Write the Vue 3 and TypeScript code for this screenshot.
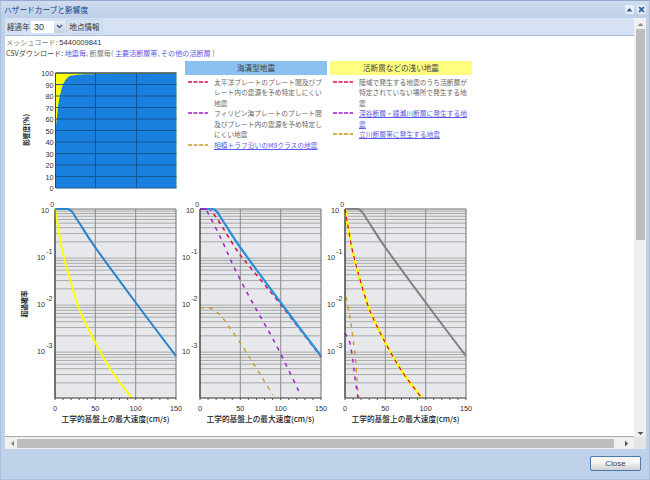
<script setup lang="ts">
type Pt = [number, number];
interface Series {
  color: string;
  width: number;
  dash?: string;
  pts: Pt[];
}
interface Plot {
  left: number;
  width: number;
  title?: string;
  series: Series[];
}

const PW = 121;
const PH = 189;
const TOP = 8;
const DECADE = 47;

const blueLine: Pt[] = [[0, 0], [12, 0], [15, 1], [18, 4], [21, 9], [25, 15], [40, 38], [81, 94], [121, 147]];
const yellowLine: Pt[] = [[0, 0], [1, 6], [2, 12], [4.3, 25], [7, 40], [10, 52], [15.7, 73], [25, 102], [40, 133], [56.7, 162], [76.7, 189]];

const plots: Plot[] = [
  {
    left: 35,
    width: 160,
    title: "超過確率",
    series: [
      { color: "#2a82cc", width: 2, pts: blueLine },
      { color: "#ffff00", width: 2, pts: yellowLine },
    ],
  },
  {
    left: 20,
    width: 145,
    series: [
      { color: "#d8104a", width: 1.5, dash: "4 4", pts: [[0, 0], [9, 0], [13, 4], [20, 14], [36.7, 41], [50, 58], [81, 96], [121, 148]] },
      { color: "#2a90dc", width: 2.2, pts: blueLine },
      { color: "#a01cc8", width: 1.6, pts: [[0, 0], [7, 0]] },
      { color: "#a01cc8", width: 1.5, dash: "4 5", pts: [[7, 2], [21.7, 31], [33, 56], [46.7, 83], [60, 107], [73, 130], [86.7, 157], [100, 185]] },
      { color: "#c99a1e", width: 1.4, dash: "4 5", pts: [[0, 99], [10, 99], [20, 106], [30, 119], [41.7, 136], [51.7, 152], [61.7, 168], [73, 186]] },
    ],
  },
  {
    left: 20,
    width: 145,
    series: [
      { color: "#808080", width: 2, pts: blueLine },
      { color: "#ffff00", width: 2.4, pts: yellowLine },
      { color: "#d8104a", width: 1.3, dash: "4 4", pts: yellowLine },
      { color: "#c99a1e", width: 1.4, dash: "4 5", pts: [[1, 88], [5, 108], [8, 129], [10.7, 153], [13, 183], [14, 189]] },
      { color: "#a01cc8", width: 1.4, dash: "4 5", pts: [[0, 124], [5, 134], [8, 153], [10, 169], [13, 189]] },
    ],
  },
];

// catmull-rom through the points so the curves come out smooth
const toPath = (pts: Pt[]) => {
  let d = `M${pts[0][0]} ${pts[0][1]}`;
  for (let i = 0; i < pts.length - 1; i++) {
    const p0 = pts[Math.max(i - 1, 0)];
    const p1 = pts[i];
    const p2 = pts[i + 1];
    const p3 = pts[Math.min(i + 2, pts.length - 1)];
    const c1x = p1[0] + (p2[0] - p0[0]) / 6;
    const c1y = Math.max(p1[1] + (p2[1] - p0[1]) / 6, 0);
    const c2x = p2[0] - (p3[0] - p1[0]) / 6;
    const c2y = Math.max(p2[1] - (p3[1] - p1[1]) / 6, 0);
    d += ` C${c1x.toFixed(1)} ${c1y.toFixed(1)} ${c2x.toFixed(1)} ${c2y.toFixed(1)} ${p2[0]} ${p2[1]}`;
  }
  return d;
};

// log grid, 2..9 in every decade
const minorLines: number[] = [];
for (let d = 0; d < 4; d++) {
  for (let n = 2; n <= 9; n++) {
    minorLines.push(d * DECADE + DECADE * (1 - Math.log10(n)));
  }
}
const decades = [
  { exp: "0", x: -14, y: 4 },
  { exp: "-1", x: -18, y: DECADE + 4 },
  { exp: "-2", x: -18, y: DECADE * 2 + 4 },
  { exp: "-3", x: -18, y: DECADE * 3 + 4 },
];
const ticks = Array.from({ length: 16 }, (_, i) => (i * PW) / 15);
const xLabels = [0, 50, 100, 150];

const percent = [100, 90, 80, 70, 60, 50, 40, 30, 20, 10, 0];
const blueArea =
  "M0 115 L0 57 " +
  toPath([[0, 57], [1.5, 44], [3, 30], [6.7, 14], [11.7, 5], [20, 2], [45, 1], [121, 0.5]]).replace("M0 57", "") +
  " L121 115 Z";

const legendSea = [
  { color: "#d8104a", text: "太平洋プレートのプレート間及びプレート内の震源を予め特定しにくい地震", link: false },
  { color: "#a01cc8", text: "フィリピン海プレートのプレート間及びプレート内の震源を予め特定しにくい地震", link: false },
  { color: "#c99a1e", text: "相模トラフ沿いのM8クラスの地震", link: true },
];
const legendLand = [
  { color: "#d8104a", text: "陸域で発生する地震のうち活断層が特定されていない場所で発生する地震", link: false },
  { color: "#a01cc8", text: "深谷断層・綾瀬川断層に発生する地震", link: true },
  { color: "#c99a1e", text: "立川断層帯に発生する地震", link: true },
];
const legends = [
  { title: "海溝型地震", cls: "head-sea", items: legendSea },
  { title: "活断層などの浅い地震", cls: "head-land", items: legendLand },
];
</script>

<template>
  <div class="window">
    <div class="titlebar">
      <span class="title">ハザードカーブと影響度</span>
      <div class="tools">
        <span class="tool">
          <svg width="9" height="9" viewBox="0 0 9 9"><path d="M1.5 6.5 L4.5 3 L7.5 6.5 Z" fill="#2f5f9e" /></svg>
        </span>
        <span class="tool">
          <svg width="9" height="9" viewBox="0 0 9 9"><path d="M2 2 L7 7 M7 2 L2 7" stroke="#3f6aa4" stroke-width="1.8" /></svg>
        </span>
      </div>
    </div>

    <div class="inner">
      <div class="body-row">
        <div class="left-col">
          <div class="toolbar">
            <span class="tb-label">経過年</span>
            <div class="select">
              <span class="select-value">30</span>
              <span class="select-arrow">
                <svg width="7" height="5" viewBox="0 0 7 5"><path d="M1 1 L3.5 3.6 L6 1" fill="none" stroke="#3a5f96" stroke-width="1.4" /></svg>
              </span>
            </div>
            <button class="tb-button">地点情報</button>
          </div>

          <div class="content">
            <div class="meta">
              <div class="meta-line"><span class="muted">メッシュコード:</span> <span class="code">5440009841</span></div>
              <div class="meta-line"><span class="dark">CSVダウンロード:</span> <span class="plain-link">地震毎</span><span class="muted">, 断層毎( </span><span class="plain-link">主要活断層帯</span><span class="muted">, </span><span class="plain-link">その他の活断層</span><span class="muted"> )</span></div>
            </div>

            <div class="top-row">
              <svg class="impact" width="160" height="135" viewBox="0 0 160 135">
                <text class="axis-title" transform="translate(9 69) rotate(-90)" text-anchor="middle">影響度(%)</text>
                <g transform="translate(35.5 12)">
                  <rect width="121" height="115" fill="#ffff00" />
                  <path :d="blueArea" fill="#1a80e0" />
                  <line v-for="(p, i) in percent" :key="p" x1="0" x2="121" :y1="i * 11.5" :y2="i * 11.5" stroke="#14568f" stroke-width="1" />
                  <line x1="40" x2="40" y1="0" y2="115" stroke="#14568f" />
                  <line x1="81" x2="81" y1="0" y2="115" stroke="#14568f" />
                  <path d="M0 115 V0 H121" fill="none" stroke="#444" stroke-width="1" />
                  <text v-for="(p, i) in percent" :key="'l' + p" class="tick" x="-2" :y="i * 11.5 + 3" text-anchor="end">{{ p }}</text>
                </g>
              </svg>

              <div v-for="group in legends" :key="group.title" class="legend">
                <div class="legend-head" :class="group.cls">{{ group.title }}</div>
                <div v-for="item in group.items" :key="item.text" class="legend-row">
                  <svg class="sample" width="20" height="10" viewBox="0 0 20 10">
                    <line x1="0" x2="20" y1="5" y2="5" :stroke="item.color" stroke-width="1.4" stroke-dasharray="4 1.5" />
                  </svg>
                  <a v-if="item.link" class="legend-link">{{ item.text }}</a>
                  <span v-else class="legend-text">{{ item.text }}</span>
                </div>
              </div>
            </div>

            <div class="plots">
              <svg
                v-for="(plot, idx) in plots"
                :key="idx"
                :width="plot.width"
                height="226"
                :viewBox="`0 0 ${plot.width} 226`"
              >
                <text v-if="plot.title" class="axis-title" transform="translate(7 103) rotate(-90)" text-anchor="middle">{{ plot.title }}</text>
                <g :transform="`translate(${plot.left} ${TOP})`">
                  <rect :width="PW" :height="PH" fill="#e6e8ec" />
                  <line v-for="y in minorLines" :key="y" x1="0" :x2="PW" :y1="y" :y2="y" stroke="#a8a8a8" stroke-width="1" />
                  <line x1="40.3" x2="40.3" y1="0" :y2="PH" stroke="#8a8a8a" />
                  <line x1="80.7" x2="80.7" y1="0" :y2="PH" stroke="#8a8a8a" />
                  <path :d="`M0 ${PH} V0 H${PW} V${PH}`" fill="none" stroke="#707070" stroke-width="1" />
                  <path
                    v-for="(s, j) in plot.series"
                    :key="j"
                    :d="toPath(s.pts)"
                    fill="none"
                    :stroke="s.color"
                    :stroke-width="s.width"
                    :stroke-dasharray="s.dash"
                  />
                  <line x1="0" :x2="PW" :y1="PH" :y2="PH" stroke="#333" />
                  <line x1="0" x2="0" y1="0" :y2="PH" stroke="#333" />
                  <line v-for="t in ticks" :key="t" :x1="t" :x2="t" :y1="PH" :y2="PH + 2" stroke="#555" />
                  <text v-for="d in decades" :key="d.exp" class="tick" :x="d.x" :y="d.y">10<tspan class="sup" dx="1" dy="-6">{{ d.exp }}</tspan></text>
                  <text
                    v-for="(v, k) in xLabels"
                    :key="v"
                    class="tick"
                    :x="(k * PW) / 3"
                    :y="PH + 13"
                    text-anchor="middle"
                  >{{ v }}</text>
                  <text class="axis-title wide" :x="PW / 2" :y="PH + 24" text-anchor="middle">工学的基盤上の最大速度(cm/s)</text>
                </g>
              </svg>
            </div>
          </div>
        </div>

        <div class="vscroll">
          <svg class="arrow" width="9" height="7" viewBox="0 0 9 7"><path d="M1.5 5 L4.5 2 L7.5 5 Z" fill="#8a8a8a" /></svg>
          <div class="vthumb"></div>
          <div class="vspace"></div>
          <svg class="arrow" width="9" height="7" viewBox="0 0 9 7"><path d="M1.5 2 L4.5 5 L7.5 2 Z" fill="#555" /></svg>
        </div>
      </div>

      <div class="hscroll">
        <div class="hbar">
          <svg width="7" height="9" viewBox="0 0 7 9"><path d="M5 1.5 L2 4.5 L5 7.5 Z" fill="#8a8a8a" /></svg>
          <div class="hthumb"></div>
          <svg width="7" height="9" viewBox="0 0 7 9"><path d="M2 1.5 L5 4.5 L2 7.5 Z" fill="#555" /></svg>
        </div>
        <div class="corner"></div>
      </div>
    </div>

    <div class="footer">
      <button class="close">Close</button>
    </div>
  </div>
</template>

<style>
html,
body {
  margin: 0;
  background: #fff;
}
</style>

<style scoped>
.window {
  width: 650px;
  height: 480px;
  box-sizing: border-box;
  display: flex;
  flex-direction: column;
  background: #bfd1e9;
  border-top: 1px solid #8fa9d0;
  border-left: 1px solid #a9bfdf;
  border-right: 1px solid #a9bfdf;
  border-bottom: 1px solid #a9bfdf;
  font-family: "Noto Sans CJK JP", "Liberation Sans", sans-serif;
  overflow: hidden;
}
.titlebar {
  height: 17px;
  flex: none;
  display: flex;
  align-items: center;
  justify-content: space-between;
  padding: 0 3px 0 3px;
  background: linear-gradient(#d0dcee, #bccfe7);
}
.title {
  font-size: 7.7px;
  color: #15428b;
}
.tools {
  display: flex;
  gap: 3px;
}
.tool {
  width: 9px;
  height: 9px;
  display: block;
  background: #e8f0fa;
  border-radius: 2px;
}
.tool svg {
  display: block;
}
.inner {
  margin: 0 3px 0 4px;
  height: 431px;
  flex: none;
  display: flex;
  flex-direction: column;
}
.body-row {
  display: flex;
  height: 419px;
  flex: none;
}
.left-col {
  flex: 1;
  min-width: 0;
  display: flex;
  flex-direction: column;
}
.toolbar {
  height: 17px;
  flex: none;
  display: flex;
  align-items: center;
  padding-left: 2px;
  background: #d6e2f3;
  border-bottom: 1px solid #a9bfdf;
}
.tb-label {
  font-size: 7.6px;
  color: #333;
  width: 24px;
}
.select {
  width: 34px;
  height: 12px;
  display: flex;
  background: #fff;
}
.select-value {
  flex: 1;
  font-family: "Liberation Sans", sans-serif;
  font-size: 9px;
  line-height: 12px;
  padding-left: 3px;
  color: #333;
}
.select-arrow {
  width: 11px;
  display: flex;
  align-items: center;
  justify-content: center;
  background: linear-gradient(#e8eef6, #c4cfde);
}
.tb-button {
  margin-left: 1px;
  width: 37px;
  height: 15px;
  padding: 0;
  border: 1px solid #c5d5ea;
  border-radius: 3px;
  background: #d3e1f3;
  font-family: inherit;
  font-size: 7.6px;
  color: #333;
}
.content {
  flex: 1;
  min-height: 0;
  background: #fff;
  overflow: hidden;
  border-bottom: 1px solid #a8a8a8;
}
.meta {
  padding: 1px 0 0 1px;
  height: 24px;
}
.meta-line {
  height: 11px;
  font-size: 7.1px;
  line-height: 11px;
  white-space: pre-wrap;
}
.muted {
  color: #777;
}
.dark {
  color: #444;
}
.code {
  font-family: "Liberation Sans", sans-serif;
  font-size: 7.6px;
  color: #333;
}
.plain-link {
  color: #5a5ae6;
}
.top-row {
  display: flex;
  height: 140px;
  padding-left: 15px;
}
.impact {
  flex: none;
}
.legend {
  width: 142px;
  flex: none;
  margin-left: 5px;
}
.legend + .legend {
  margin-left: 3px;
}
.legend-head {
  height: 14px;
  line-height: 14px;
  text-align: center;
  font-size: 7.6px;
  color: #444;
}
.head-sea {
  background: #8cc0f0;
}
.head-land {
  background: #ffff7f;
}
.legend-row {
  display: flex;
  padding: 1.5px 0 0 3px;
  margin-bottom: -1.5px;
}
.sample {
  flex: none;
  margin-right: 6px;
}
.legend-text,
.legend-link {
  font-size: 6.75px;
  line-height: 10.6px;
  width: 109px;
}
.legend-text {
  color: #666;
}
.legend-link {
  color: #5a5ae6;
  text-decoration: underline;
}
.plots {
  display: flex;
  padding-left: 15px;
}
.plots svg {
  flex: none;
  display: block;
  overflow: visible;
}
.tick {
  font-family: "Liberation Sans", sans-serif;
  font-size: 7.3px;
  fill: #333;
}
.sup {
  font-size: 7px;
}
.axis-title {
  font-size: 6.8px;
  font-weight: 700;
  fill: #222;
}
.wide {
  font-size: 7.7px;
  font-weight: 500;
}
.vscroll {
  width: 12px;
  flex: none;
  display: flex;
  flex-direction: column;
  align-items: center;
  background: #f0f0f0;
  padding-top: 3px;
}
.arrow {
  flex: none;
  height: 7px;
}
.vthumb {
  width: 9px;
  height: 211px;
  margin-top: 1px;
  background: #bdbdbd;
}
.vspace {
  flex: 1;
}
.hscroll {
  display: flex;
  height: 12px;
  flex: none;
}
.hbar {
  flex: 1;
  display: flex;
  align-items: center;
  padding: 0 4px;
  background: #f0f0f0;
}
.hthumb {
  height: 9px;
  width: 597px;
  margin-left: 1px;
  margin-right: auto;
  background: #bdbdbd;
}
.corner {
  width: 12px;
  background: #e4e4e4;
}
.footer {
  flex: 1;
  display: flex;
  justify-content: flex-end;
  align-items: flex-start;
  padding: 7px 8px 0 0;
}
.close {
  width: 51px;
  height: 15px;
  padding: 0;
  border: 1px solid #4a7ab0;
  border-radius: 2px;
  background: linear-gradient(#f6f6f6 40%, #d0d0d0);
  font-family: "Liberation Sans", sans-serif;
  font-size: 8px;
  color: #444;
}
</style>
